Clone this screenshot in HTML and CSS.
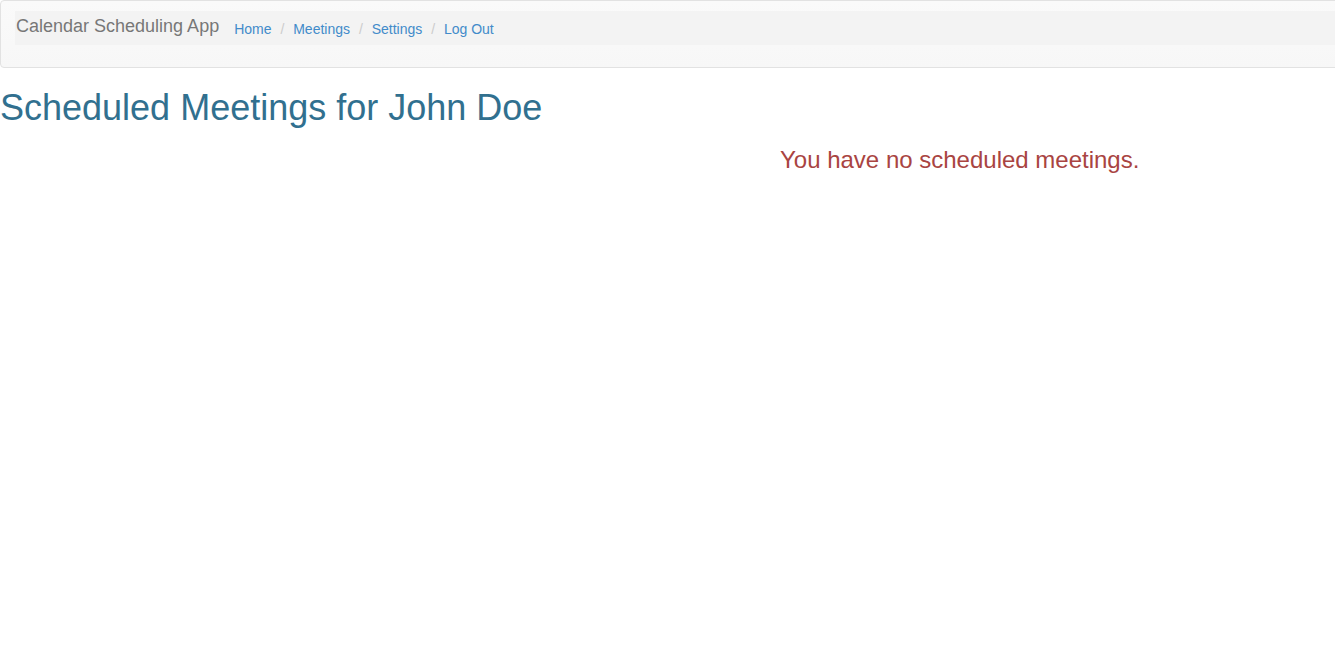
FILE: index.html
```html
<!DOCTYPE html>
<html lang="en">
<head>
<meta charset="utf-8">
<title>Calendar Scheduling App</title>
<link rel="stylesheet" href="styles.css">
</head>
<body>
<nav class="navbar">
  <div class="crumbs">
    <span class="brand">Calendar Scheduling App</span>
    <ol class="breadcrumb">
      <li><a href="#">Home</a></li>
      <li><a href="#">Meetings</a></li>
      <li><a href="#">Settings</a></li>
      <li><a href="#">Log Out</a></li>
    </ol>
  </div>
</nav>
<main class="content">
  <h1 class="title">Scheduled Meetings for John Doe</h1>
  <p class="empty">You have no scheduled meetings.</p>
</main>
</body>
</html>
```
FILE: styles.css
```css
html, body {
  margin: 0;
  padding: 0;
  background: #fff;
  font-family: "Liberation Sans", Arial, sans-serif;
  font-size: 14px;
  color: #333;
}

.navbar {
  border: 1px solid #e2e2e2;
  border-radius: 4px;
  margin-right: -12px;
  padding: 10px 0 22px 14px;
  background: linear-gradient(to bottom, #fafafa 0%, #f7f7f7 100%);
}

.crumbs {
  display: flex;
  align-items: flex-start;
  background: #f3f3f3;
  padding: 8px 0 6px 1px;
}

.brand {
  font-size: 18px;
  line-height: 20px;
  color: #777;
  margin-top: -3px;
  margin-right: 15px;
}

.breadcrumb {
  list-style: none;
  margin: 0;
  padding: 0;
  line-height: 20px;
}

.breadcrumb li {
  display: inline-block;
}

.breadcrumb li + li::before {
  content: "/\00a0";
  padding: 0 5px;
  color: #ccc;
}

.breadcrumb a {
  color: #428bca;
  text-decoration: none;
}

.content {
  padding: 0;
}

.title {
  margin: 20px 0 0;
  font-size: 36px;
  line-height: 40px;
  font-weight: 500;
  color: #31708f;
}

.empty {
  margin: 19px 0 0 780px;
  font-size: 24px;
  line-height: 26px;
  color: #a94442;
}
```
